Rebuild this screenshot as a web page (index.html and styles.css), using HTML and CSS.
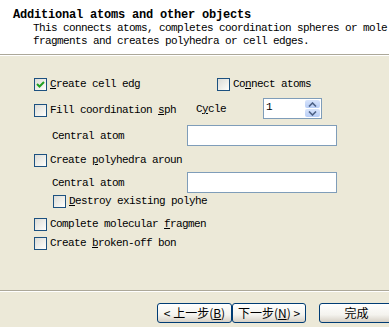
FILE: index.html
```
<html>
<head>
  <link rel="stylesheet" href="styles.css">
</head>
<body>
  <div class="wizard">
    <div class="header">
      <div class="title">Additional atoms and other objects</div>
      <div class="desc">This connects atoms, completes coordination spheres or mole</div>
      <div class="desc">fragments and creates polyhedra or cell edges.</div>
    </div>

    <div class="panel">
      <div class="row r1">
        <label class="opt w-first">
          <span class="box"><svg width="11" height="11" viewBox="0 0 11 11"><path d="M2 5 L4.5 7.5 L9 3" fill="none" stroke="#21a121" stroke-width="2"/></svg></span>
          <span class="txt"><u>C</u>reate cell edg</span>
        </label>
        <label class="opt">
          <span class="box"></span>
          <span class="txt">Co<u>n</u>nect atoms</span>
        </label>
      </div>

      <div class="row r2">
        <label class="opt w-fill">
          <span class="box"></span>
          <span class="txt">Fill coordination <u>s</u>ph</span>
        </label>
        <span class="cycle">C<u>y</u>cle</span>
        <div class="spin">
          <span class="spin-val">1</span>
          <span class="spin-btns">
            <span class="arrow"><svg width="9" height="5" viewBox="0 0 9 5"><path d="M1 4.5 L4.5 1 L8 4.5" fill="none" stroke="#4d6185" stroke-width="1.6"/></svg></span>
            <span class="arrow"><svg width="9" height="5" viewBox="0 0 9 5"><path d="M1 0.5 L4.5 4 L8 0.5" fill="none" stroke="#4d6185" stroke-width="1.6"/></svg></span>
          </span>
        </div>
      </div>

      <div class="row r3">
        <span class="field-label">Central atom</span>
        <div class="edit"></div>
      </div>

      <div class="row r4">
        <label class="opt">
          <span class="box"></span>
          <span class="txt">Create <u>p</u>olyhedra aroun</span>
        </label>
      </div>

      <div class="row r5">
        <span class="field-label">Central atom</span>
        <div class="edit"></div>
      </div>

      <div class="row r6">
        <label class="opt sub">
          <span class="box"></span>
          <span class="txt"><u>D</u>estroy existing polyhe</span>
        </label>
      </div>

      <div class="row r7">
        <label class="opt">
          <span class="box"></span>
          <span class="txt">Complete molecular <u>f</u>ragmen</span>
        </label>
      </div>

      <div class="row r8">
        <label class="opt">
          <span class="box"></span>
          <span class="txt">Create <u>b</u>roken-off bon</span>
        </label>
      </div>
    </div>

    <div class="footer">
      <button class="btn back">&lt; 上一步(<u>B</u>)</button>
      <button class="btn next">下一步(<u>N</u>) &gt;</button>
      <button class="btn finish">完成</button>
    </div>
  </div>
</body>
</html>
```

FILE: styles.css
```
body {
  margin: 0;
  background: #ece9d8;
  font-family: "Liberation Mono", "DejaVu Sans Mono", monospace;
  color: #000;
}

.wizard {
  width: 389px;
  height: 327px;
  overflow: hidden;
  display: flex;
  flex-direction: column;
}

.header {
  height: 55px;
  background: #fff;
  border-bottom: 1px solid #aca899;
  box-shadow: 0 1px 0 #fff;
  padding: 9px 0 0 13px;
  box-sizing: border-box;
  flex-shrink: 0;
  white-space: nowrap;
  overflow: hidden;
}

.title {
  font-weight: bold;
  font-size: 12px;
  letter-spacing: -0.2px;
  line-height: 13px;
}

.desc {
  font-size: 11px;
  letter-spacing: -0.6px;
  line-height: 13px;
  padding-left: 20px;
}

.desc:first-of-type {
  margin-top: 2px;
}

.panel {
  flex: 1;
  padding: 23px 0 0 34px;
  font-size: 11px;
  letter-spacing: -0.6px;
  white-space: nowrap;
}

.row {
  display: flex;
  align-items: center;
}

.r1 { height: 13px; }
.r2 { height: 21px; margin-top: 7px; }
.r3 { height: 21px; margin-top: 6px; }
.r4 { height: 13px; margin-top: 8px; }
.r5 { height: 21px; margin-top: 5px; }
.r6 { height: 13px; margin-top: 2px; }
.r7 { height: 13px; margin-top: 10px; }
.r8 { height: 13px; margin-top: 6px; }

.opt {
  display: flex;
  align-items: center;
  gap: 3px;
}

.w-first { width: 183px; }
.w-fill { width: 162px; align-self: flex-end; margin-bottom: 2px; }
.sub { margin-left: 19px; }

.txt {
  line-height: 13px;
}

.box {
  width: 13px;
  height: 13px;
  box-sizing: border-box;
  border: 1px solid #1c5180;
  background: linear-gradient(135deg, #dcdcd7 0%, #f4f4f0 70%, #ffffff 100%);
  display: flex;
  align-items: center;
  justify-content: center;
  flex-shrink: 0;
}

.cycle {
  width: 67px;
}

.spin {
  width: 59px;
  height: 21px;
  box-sizing: border-box;
  border: 1px solid #7f9db9;
  background: #fff;
  display: flex;
  justify-content: space-between;
}

.spin-val {
  padding: 1px 0 0 2px;
  line-height: 14px;
}

.spin-btns {
  width: 15px;
  margin: 1px;
  display: flex;
  flex-direction: column;
  gap: 1px;
}

.arrow {
  flex: 1;
  background: linear-gradient(180deg, #d8e4fb, #b7cdf6);
  border-radius: 2px;
  display: flex;
  align-items: center;
  justify-content: center;
}

.field-label {
  width: 135px;
  padding-left: 18px;
}

.edit {
  width: 150px;
  height: 21px;
  box-sizing: border-box;
  border: 1px solid #7f9db9;
  background: #fff;
}

.footer {
  height: 37px;
  flex-shrink: 0;
  box-sizing: border-box;
  border-top: 1px solid #aca899;
  box-shadow: inset 0 1px 0 #fff;
  padding: 12px 0 0 157px;
  display: flex;
  align-items: flex-start;
}

.btn {
  height: 20px;
  padding: 0;
  box-sizing: border-box;
  border: 1px solid #003c74;
  border-radius: 3px;
  background: linear-gradient(180deg, #ffffff 0%, #f4f3ee 60%, #d6d0c5 100%);
  font-family: "Noto Sans CJK SC", "Liberation Sans", sans-serif;
  font-size: 12px;
  line-height: 16px;
  color: #000;
  white-space: nowrap;
  flex-shrink: 0;
}

.back { width: 75px; }
.next { width: 74px; }
.finish { width: 75px; margin-left: 13px; }
```
